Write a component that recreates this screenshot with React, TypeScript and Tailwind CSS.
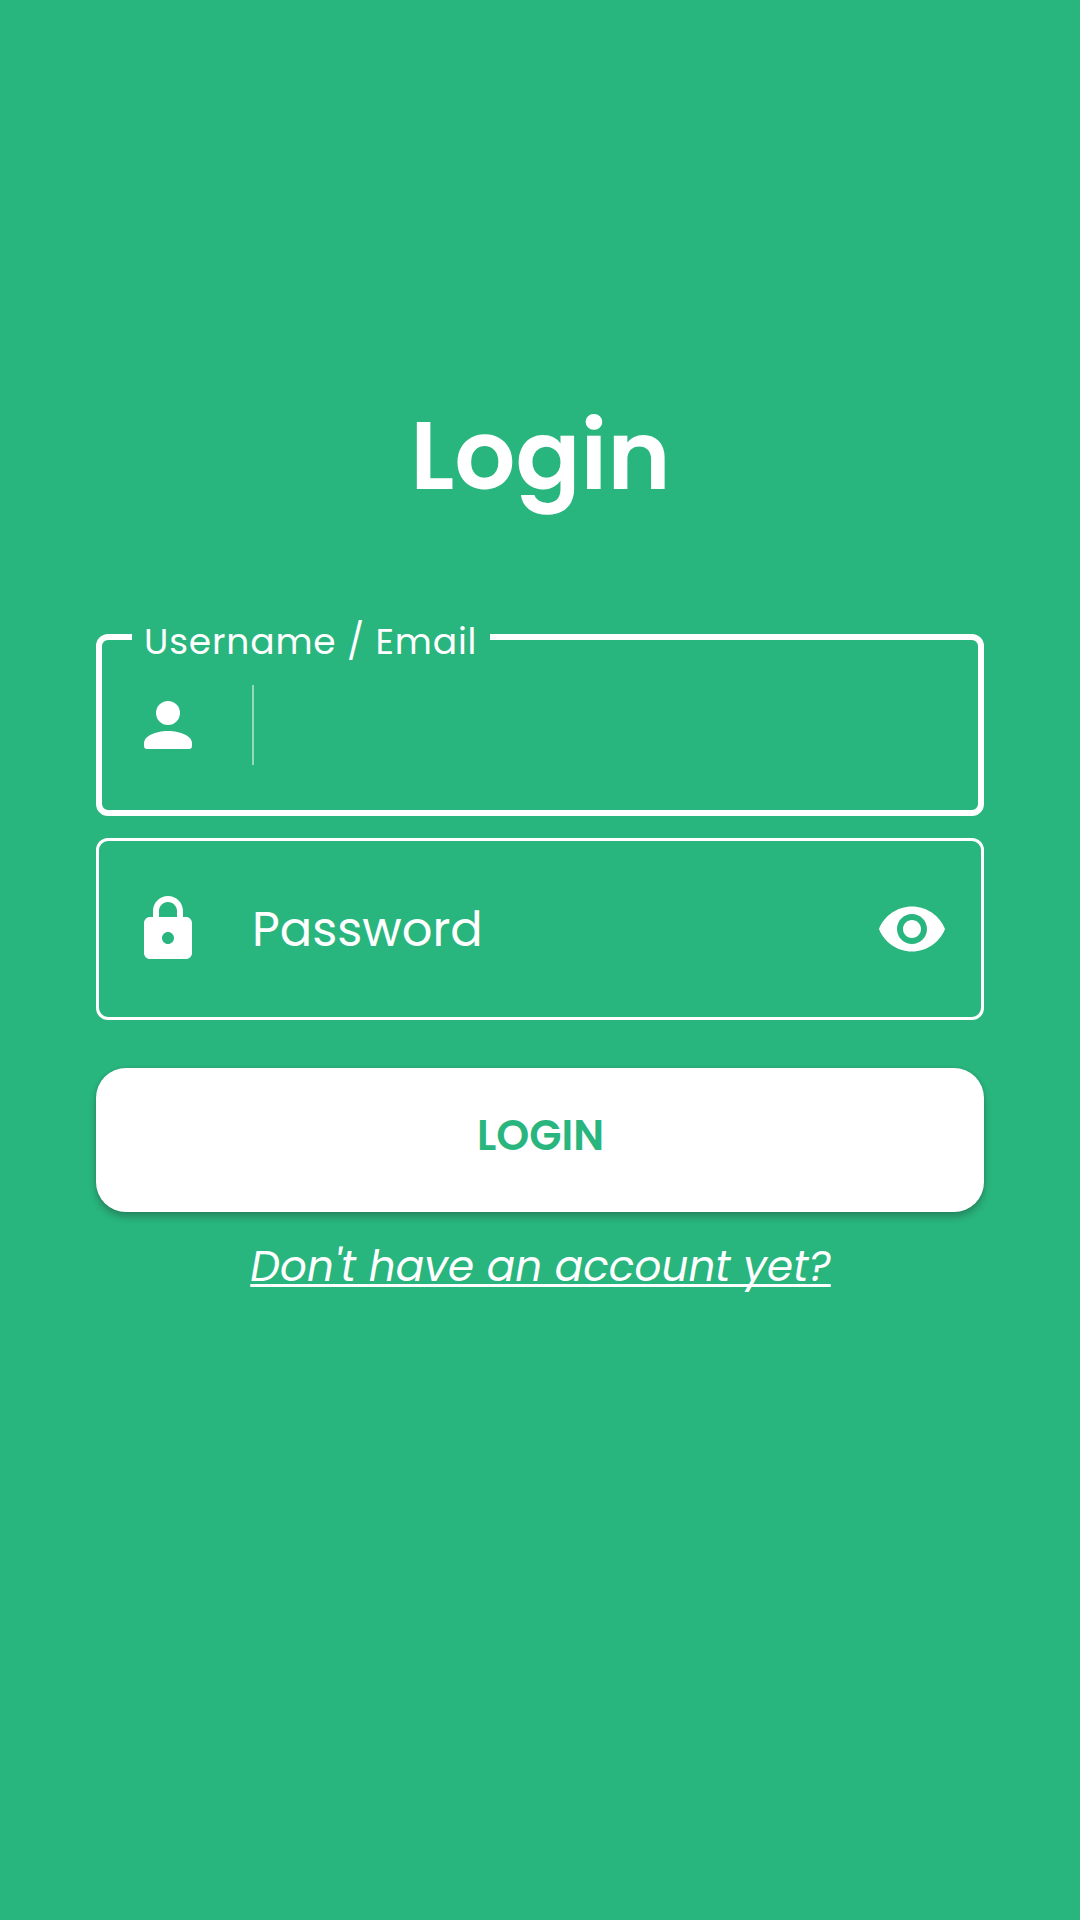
import type { ReactNode } from "react";

function Icon({ children }: { children: ReactNode }) {
  return (
    <svg viewBox="0 0 24 24" fill="currentColor" aria-hidden="true" className="size-[72px] shrink-0">
      {children}
    </svg>
  );
}

export default function App() {
  return (
    <main className="flex min-h-[1920px] flex-col bg-[#29b57e] px-24 pt-[396px] font-['Poppins','Inter',sans-serif] text-white">
      <h1 className="pl-px text-center text-[96px] leading-[119px] font-semibold">Login</h1>

      <form className="mt-[119px] flex flex-col" onSubmit={(e) => e.preventDefault()}>
        <div className="flex flex-col gap-[22px]">
          <div className="relative flex h-[182px] items-center rounded-xl border-6 border-white pl-[30px]">
            <label className="absolute -top-6 left-[30px] h-[51px] w-[358px] bg-[#29b57e] pl-3 text-[36px] leading-[51px] tracking-[0.86px] whitespace-nowrap">
              Username / Email
            </label>
            <Icon>
              <circle cx="12" cy="8" r="4" />
              <path d="M12 14c-4.2 0-8 1.7-8 4.1V19c0 .6.4 1 1 1h14c.6 0 1-.4 1-1v-.9c0-2.4-3.8-4.1-8-4.1z" />
            </Icon>
            <div className="ml-12 h-20 w-[2px] bg-white/50" />
          </div>

          <div className="flex h-[182px] items-center rounded-xl border-3 border-white px-[33px]">
            <Icon>
              <path d="M18 8h-1V6c0-2.76-2.24-5-5-5S7 3.24 7 6v2H6c-1.1 0-2 .9-2 2v10c0 1.1.9 2 2 2h12c1.1 0 2-.9 2-2V10c0-1.1-.9-2-2-2zm-6 9c-1.1 0-2-.9-2-2s.9-2 2-2 2 .9 2 2-.9 2-2 2zm3-9H9V6c0-1.66 1.34-3 3-3s3 1.34 3 3v2z" />
            </Icon>
            <span className="ml-12 flex-1 pt-[2px] text-5xl leading-[70px]">Password</span>
            <Icon>
              <path d="M12 4.5C7 4.5 2.73 7.61 1 12c1.73 4.39 6 7.5 11 7.5s9.27-3.11 11-7.5c-1.73-4.39-6-7.5-11-7.5zM12 17c-2.76 0-5-2.24-5-5s2.24-5 5-5 5 2.24 5 5-2.24 5-5 5zm0-8c-1.66 0-3 1.34-3 3s1.34 3 3 3 3-1.34 3-3-1.34-3-3-3z" />
            </Icon>
          </div>
        </div>

        <button
          type="submit"
          className="mt-12 h-36 rounded-[30px] bg-white pb-2 pl-px text-[42px] leading-[136px] font-semibold text-[#29b57e] shadow-[0_5px_7px_rgba(30,50,40,0.32),0_0_3px_rgba(30,50,40,0.16)]"
        >
          LOGIN
        </button>
      </form>

      <a
        href="#register"
        className="mt-[29px] ml-px self-center text-[42px] leading-[52px] tracking-[0.1px] whitespace-nowrap italic underline decoration-3 underline-offset-[3px] [text-decoration-skip-ink:none]"
      >
        Don't have an account yet?
      </a>
    </main>
  );
}
